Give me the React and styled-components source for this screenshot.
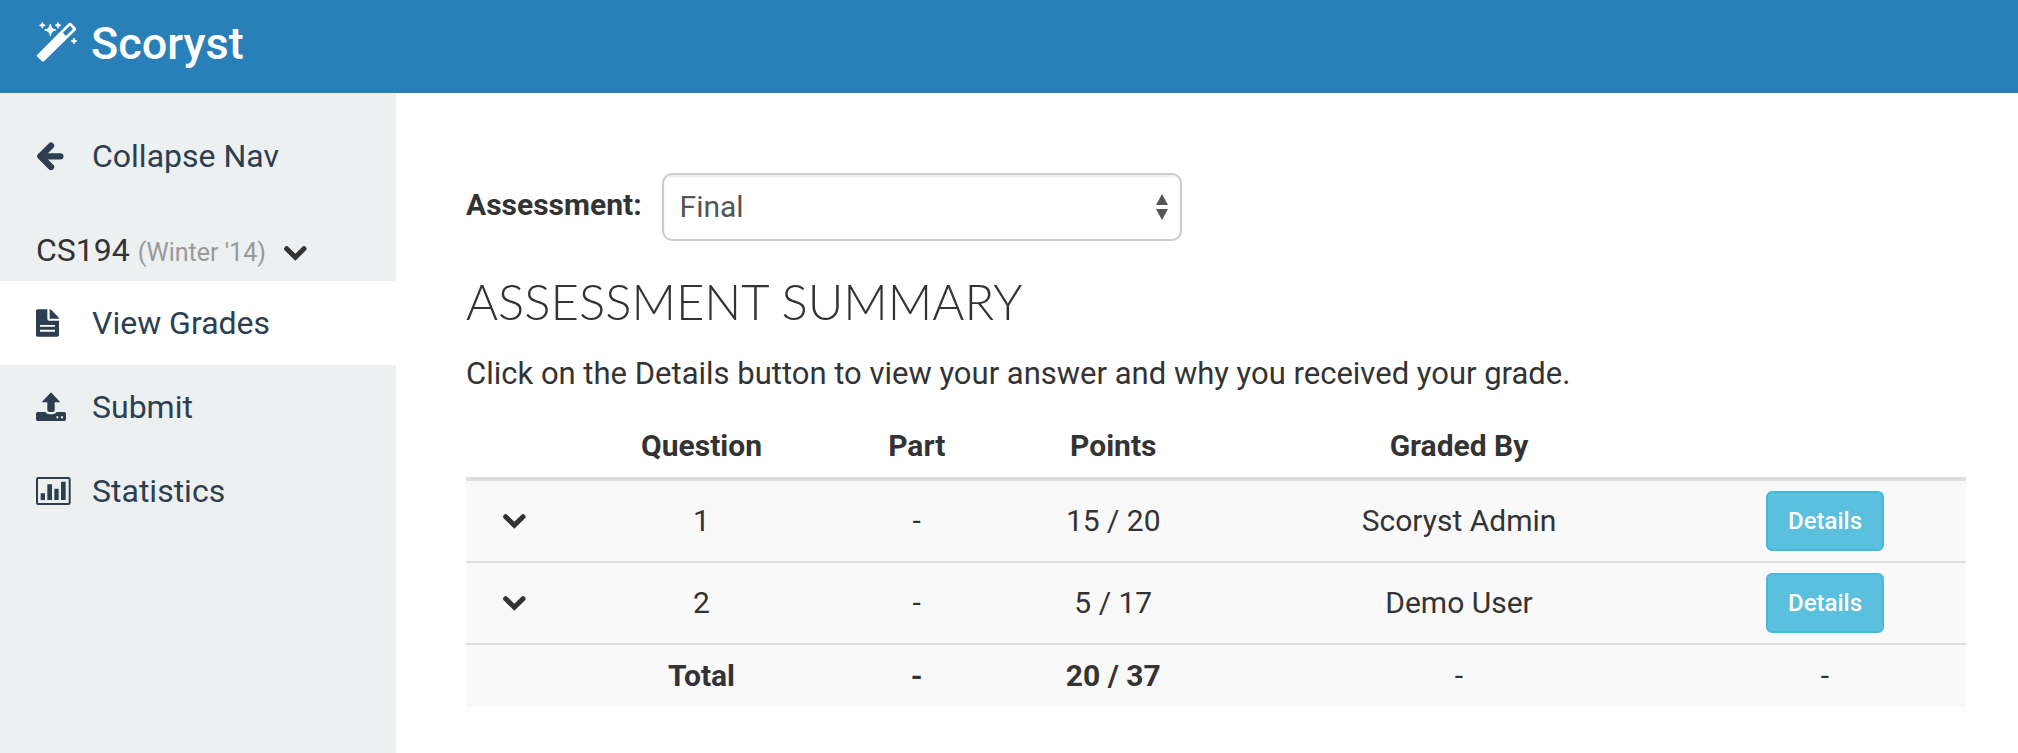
import React from "react";
import styled, { createGlobalStyle } from "styled-components";

const GlobalStyle = createGlobalStyle`
  *, *::before, *::after { box-sizing: border-box; }
  body {
    margin: 0;
    background: #fff;
    color: #333;
    font-family: Roboto, "Liberation Sans", sans-serif;
    font-size: 30px;
    line-height: 42px;
  }
`;

const Page = styled.div`
  display: flex;
  flex-direction: column;
  min-height: 100vh;
`;

const Header = styled.header`
  display: flex;
  align-items: center;
  padding: 0 36px 5px;
  height: 93px;
  background: #2980b9;
`;

const Brand = styled.a`
  display: flex;
  align-items: center;
  gap: 14px;
  color: #fff;
  font-size: 45px;
  font-weight: 500;
  line-height: 56px;
  text-decoration: none;

  svg { margin-bottom: 4px; }
`;

const Body = styled.div`
  display: flex;
  flex: 1;
`;

const Sidebar = styled.nav`
  flex: 0 0 396px;
  padding-top: 21px;
  background: #ecf0f1;
  font-size: 32px;
`;

const NavItem = styled.a`
  display: flex;
  align-items: center;
  height: 84px;
  padding: 0 36px;
  background: ${(p) => (p.$active ? "#fff" : "transparent")};
  color: #2c3e50;
  text-decoration: none;
`;

const NavIcon = styled.span`
  display: flex;
  flex: 0 0 56px;
`;

const CourseButton = styled.button`
  display: flex;
  align-items: baseline;
  width: 100%;
  height: 62px;
  margin-top: 21px;
  padding: 10px 36px;
  border: 0;
  background: none;
  color: #333;
  font: inherit;
  text-align: left;
`;

const Term = styled.small`
  margin: 0 18px 0 8px;
  color: #999;
  font-size: 25px;
`;

const Main = styled.main`
  flex: 1;
  min-width: 0;
  padding: 80px 52px 46px 70px;
`;

const Field = styled.div`
  display: flex;
  align-items: center;
  gap: 20px;
`;

const FieldLabel = styled.label`
  font-weight: 700;
  padding-bottom: 4px;
`;

const SelectBox = styled.div`
  position: relative;
  flex: 0 1 520px;
`;

const Select = styled.select`
  display: block;
  width: 100%;
  height: 68px;
  padding: 0 48px 0 16px;
  border: 2px solid #ccc;
  border-radius: 10px;
  background: #fff;
  box-shadow: inset 0 2px 2px rgba(0, 0, 0, 0.075);
  color: #555;
  font: inherit;
  appearance: none;
`;

const SelectArrows = styled.svg`
  position: absolute;
  top: 20px;
  right: 14px;
  pointer-events: none;
`;

const Title = styled.h1`
  margin: 28px 0 0;
  font-family: Lato, "Open Sans", sans-serif;
  font-size: 49px;
  font-weight: 300;
  line-height: 64px;
  text-transform: uppercase;
`;

const Intro = styled.p`
  margin: 20px 0 0;
  font-size: 31px;
`;

const Table = styled.table`
  width: 100%;
  margin-top: 20px;
  border-collapse: collapse;
  table-layout: fixed;
  text-align: center;
`;

const Column = styled.col`
  width: ${(p) => p.$share}%;
`;

const HeadCell = styled.th`
  padding: 10px 0;
  border-bottom: 4px solid #ddd;
  font-weight: 700;
`;

const Row = styled.tr`
  background: #f9f9f9;
  & + & { border-top: 2px solid #ddd; }
`;

const Cell = styled.td`
  padding: 10px 0;
  font-weight: ${(p) => (p.$strong ? 700 : 400)};
`;

const IconButton = styled.button`
  display: block;
  margin: 0 auto;
  padding: 9px 8px 8px;
  border: 0;
  background: none;
  color: inherit;
  line-height: 0;
`;

const DetailsButton = styled.button`
  display: block;
  height: 60px;
  margin: 0 auto;
  padding: 0 20px;
  border: 2px solid #46b8da;
  border-radius: 6px;
  background: #5bc0de;
  color: #fff;
  font: inherit;
  font-size: 24px;
  font-weight: 500;
`;

const Wand = () => (
  <svg width="41" height="41" viewBox="108 64 123 123" fill="currentColor" aria-hidden="true">
    <path
      fillRule="evenodd"
      d="M112 162L206 68Q210 64 214 68L227 81Q230 85 227 89L133 181Q129 185 125 181L112 168Q109 165 112 162ZM208 77L190 95Q189 97 191 99L196 104Q198 105 200 104L217 87Q219 85 217 83L212 77Q210 75 208 77Z"
    />
    <path d="M151 70Q153 86 168 88Q153 90 151 106Q149 90 134 88Q149 86 151 70Z" stroke="currentColor" strokeWidth="3" />
    <path d="M127 65Q128 73 136 74Q128 75 127 83Q126 75 118 74Q126 73 127 65ZM174 65Q175 73 183 74Q175 75 174 83Q173 75 165 74Q173 73 174 65ZM222 112Q223 120 231 121Q223 122 222 130Q221 122 213 121Q221 120 222 112Z" stroke="currentColor" strokeWidth="2" />
  </svg>
);

const Chevron = () => (
  <svg width="23" height="15" viewBox="848 736 69 45" fill="none" stroke="currentColor" strokeWidth="15" strokeLinecap="round" aria-hidden="true">
    <path d="M856 744L882 770L908 744" />
  </svg>
);

const ArrowLeft = () => (
  <svg width="29" height="29" viewBox="108 427 87 87" fill="none" stroke="currentColor" strokeWidth="19" strokeLinecap="round" strokeLinejoin="round" aria-hidden="true">
    <path d="M153 438L121 470L153 502" />
    <path d="M125 470H181" />
  </svg>
);

const FileIcon = () => (
  <svg width="24" height="28" viewBox="108 119 72 84" fill="currentColor" aria-hidden="true">
    <path
      fillRule="evenodd"
      d="M113 120H142V149Q142 154 147 154H177V197Q177 202 172 202H113Q108 202 108 197V125Q108 120 113 120ZM120 167V172H165V167ZM120 181V187H165V181Z"
    />
    <path d="M149 120Q152 120 154 122L174 142Q177 145 177 148H149Z" />
  </svg>
);

const UploadIcon = () => (
  <svg width="30" height="30" viewBox="108 367 90 90" fill="currentColor" aria-hidden="true">
    <path d="M153 368L181 398H164V421Q164 427 158 427H148Q142 427 142 421V398H125Z" />
    <path
      fillRule="evenodd"
      d="M113 427H136Q141 434 148 434H158Q165 434 170 427H193Q198 427 198 432V449Q198 454 193 454H113Q108 454 108 449V432Q108 427 113 427ZM169 440V446H175V440ZM183 440V446H189V440Z"
    />
  </svg>
);

const ChartIcon = () => (
  <svg width="35" height="28" viewBox="108 623 105 84" fill="currentColor" aria-hidden="true">
    <rect x="111" y="626" width="98" height="78" rx="4" fill="none" stroke="currentColor" strokeWidth="6" />
    <path d="M122 672h13v20h-13zM142 645h14v47h-14zM163 658h13v34h-13zM183 637h14v55h-14z" />
  </svg>
);

const links = [
  { label: "View Grades", icon: <FileIcon />, active: true },
  { label: "Submit", icon: <UploadIcon /> },
  { label: "Statistics", icon: <ChartIcon /> },
];

const columnShares = [6.4, 18.6, 10.1, 16.1, 30, 18.8];

const grades = [
  { question: "1", part: "-", points: "15 / 20", grader: "Scoryst Admin" },
  { question: "2", part: "-", points: "5 / 17", grader: "Demo User" },
];

export default function App() {
  return (
    <Page>
      <GlobalStyle />
      <Header>
        <Brand href="#">
          <Wand />
          Scoryst
        </Brand>
      </Header>
      <Body>
        <Sidebar>
          <NavItem href="#">
            <NavIcon><ArrowLeft /></NavIcon>
            Collapse Nav
          </NavItem>
          <CourseButton type="button">
            CS194
            <Term>(Winter '14)</Term>
            <Chevron />
          </CourseButton>
          {links.map((link) => (
            <NavItem key={link.label} href="#" $active={link.active}>
              <NavIcon>{link.icon}</NavIcon>
              {link.label}
            </NavItem>
          ))}
        </Sidebar>
        <Main>
          <Field>
            <FieldLabel htmlFor="assessment">Assessment:</FieldLabel>
            <SelectBox>
              <Select id="assessment" defaultValue="Final">
                <option>Final</option>
              </Select>
              <SelectArrows width="12" height="28" viewBox="0 0 12 28" fill="#555" aria-hidden="true">
                <path d="M6 1L12 12H0ZM0 16H12L6 27Z" />
              </SelectArrows>
            </SelectBox>
          </Field>
          <Title>Assessment Summary</Title>
          <Intro>Click on the Details button to view your answer and why you received your grade.</Intro>
          <Table>
            <colgroup>
              {columnShares.map((share, i) => (
                <Column key={i} $share={share} />
              ))}
            </colgroup>
            <thead>
              <tr>
                <HeadCell />
                <HeadCell scope="col">Question</HeadCell>
                <HeadCell scope="col">Part</HeadCell>
                <HeadCell scope="col">Points</HeadCell>
                <HeadCell scope="col">Graded By</HeadCell>
                <HeadCell />
              </tr>
            </thead>
            <tbody>
              {grades.map((grade) => (
                <Row key={grade.question}>
                  <Cell>
                    <IconButton type="button" aria-label={`Expand question ${grade.question}`}>
                      <Chevron />
                    </IconButton>
                  </Cell>
                  <Cell>{grade.question}</Cell>
                  <Cell>{grade.part}</Cell>
                  <Cell>{grade.points}</Cell>
                  <Cell>{grade.grader}</Cell>
                  <Cell>
                    <DetailsButton type="button">Details</DetailsButton>
                  </Cell>
                </Row>
              ))}
              <Row>
                <Cell />
                <Cell $strong>Total</Cell>
                <Cell $strong>-</Cell>
                <Cell $strong>20 / 37</Cell>
                <Cell>-</Cell>
                <Cell>-</Cell>
              </Row>
            </tbody>
          </Table>
        </Main>
      </Body>
    </Page>
  );
}
